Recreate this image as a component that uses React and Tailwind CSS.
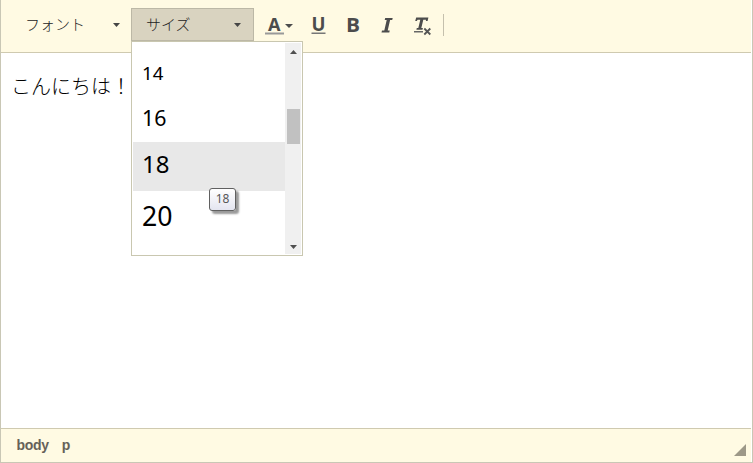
const JP = "[font-family:'Noto_Sans_CJK_JP',sans-serif] font-light";

function Caret({ className = "" }) {
  return (
    <svg className={`shrink-0 ${className}`} width="7" height="4" viewBox="0 0 7 4">
      <path d="M0 0h7L3.5 4z" fill="#454545" />
    </svg>
  );
}

function Row({ className, children }) {
  return <div className={`flex shrink-0 items-center pl-[9px] [font-family:'Noto_Sans',sans-serif] text-black ${className}`}>{children}</div>;
}

function SizeMenu() {
  return (
    <div className="absolute left-[-1px] top-[32px] z-10 flex h-[215px] w-[172px] border border-[#c9c7b0] bg-white p-px font-normal">
      <div className="flex w-[152px] flex-col overflow-hidden pt-[10px]">
        <Row className="h-[45px] pb-[5px] text-[18.67px]">14</Row>
        <Row className="h-[44px] pb-1 text-[21.33px]">16</Row>
        <Row className="h-[49px] bg-[#e8e8e8] pb-[5px] text-[24px]">18</Row>
        <Row className="h-[50px] text-[26.67px]">20</Row>
      </div>
      <div className="flex w-4 flex-col items-center bg-[#f0f0f0] pt-[7px]">
        <svg width="7" height="4" viewBox="0 0 7 4"><path d="M0 4h7L3.5 0z" fill="#505050" /></svg>
        <div className="mt-[55px] h-[35px] w-[13px] bg-[#c1c1c1]" />
        <svg className="mt-[101px]" width="7" height="4" viewBox="0 0 7 4"><path d="M0 0h7L3.5 4z" fill="#505050" /></svg>
      </div>
      <div className="absolute left-[77px] top-[146px] flex h-[23px] w-[27px] items-center justify-center rounded-[3px] border border-[#606060] bg-gradient-to-b from-white to-[#e4e5f0] pb-0.5 [font-family:'Noto_Sans',sans-serif] text-[12px] text-[#575757] shadow-[3px_3px_2px_rgba(0,0,0,0.4)]">
        18
      </div>
    </div>
  );
}

export default function App() {
  return (
    <div className="flex h-[463px] w-[753px] flex-col overflow-hidden border-x border-b border-[#c9c7b5] bg-white pr-px">
      <header className="flex h-[53px] shrink-0 items-start border-b border-[#cfcab0] bg-[#fffae3] pt-2">
        <div className={`flex h-[33px] w-[130px] items-center pl-6 text-[15px] text-[#222] ${JP}`}>
          <span className="w-[88px]">フォント</span>
          <Caret />
        </div>
        <div className={`relative flex h-[33px] w-[123px] items-center border border-[#bcb8a6] bg-[#d9d3c0] pl-[14px] text-[15px] text-[#222] ${JP}`}>
          <span className="w-[88px]">サイズ</span>
          <Caret />
          <SizeMenu />
        </div>
        <svg className="ml-[10px]" width="182" height="36" viewBox="264 8 182 36" fontFamily="'Open Sans'" fontWeight="700" fill="#4c4c4c">
          <text x="268" y="30.5" fontSize="18" textLength="12.5" lengthAdjust="spacingAndGlyphs">A</text>
          <rect x="265" y="32.5" width="19" height="2" fill="#999" />
          <path d="M285 24h8l-4 4z" />
          <text x="311.5" y="31" fontSize="19" textLength="14" lengthAdjust="spacingAndGlyphs">U</text>
          <rect x="311.5" y="32.5" width="14" height="1.5" fill="#777" />
          <text x="346" y="32" fontSize="20" textLength="14" lengthAdjust="spacingAndGlyphs">B</text>
          <path d="M385.2 18h7.5l-.5 2h-2.1l-2.4 10.5h2l-.4 2h-7.8l.5-2h2.3L386.7 20h-2z" />
          <path d="M416.2 17.5h12.2l-.8 3.6h-1.7l.1-1.4h-2.7l-2 8.3h1.6l-.4 1.7h-6.1l.4-1.7h1.5l2-8.3h-2.7l-.8 1.4h-1.6z" />
          <rect x="414" y="31" width="9" height="1.5" fill="#666" />
          <path d="M424.3 28.5l6 6M430.3 28.5l-6 6" stroke="#555" strokeWidth="1.8" />
          <path d="M443.5 14v22" stroke="#c5c0ad" />
        </svg>
      </header>
      <main className={`flex-1 pl-[10px] pt-[18px] text-[20px] leading-[30px] text-black ${JP}`}>こんにちは！</main>
      <footer className="flex h-[34px] shrink-0 items-center justify-between border-t border-[#cfcab0] bg-[#fffae3] pl-[15.5px] pr-[5px] text-[14px] font-bold tracking-[-0.3px] text-[#666159] [font-family:'Liberation_Sans',Arial,sans-serif]!">
        <div className="flex gap-[13px]"><span>body</span><span>p</span></div>
        <svg className="mt-[9px]" width="12" height="12" viewBox="0 0 12 12"><path d="M12 0v12H0z" fill="#9d9888" /></svg>
      </footer>
    </div>
  );
}
